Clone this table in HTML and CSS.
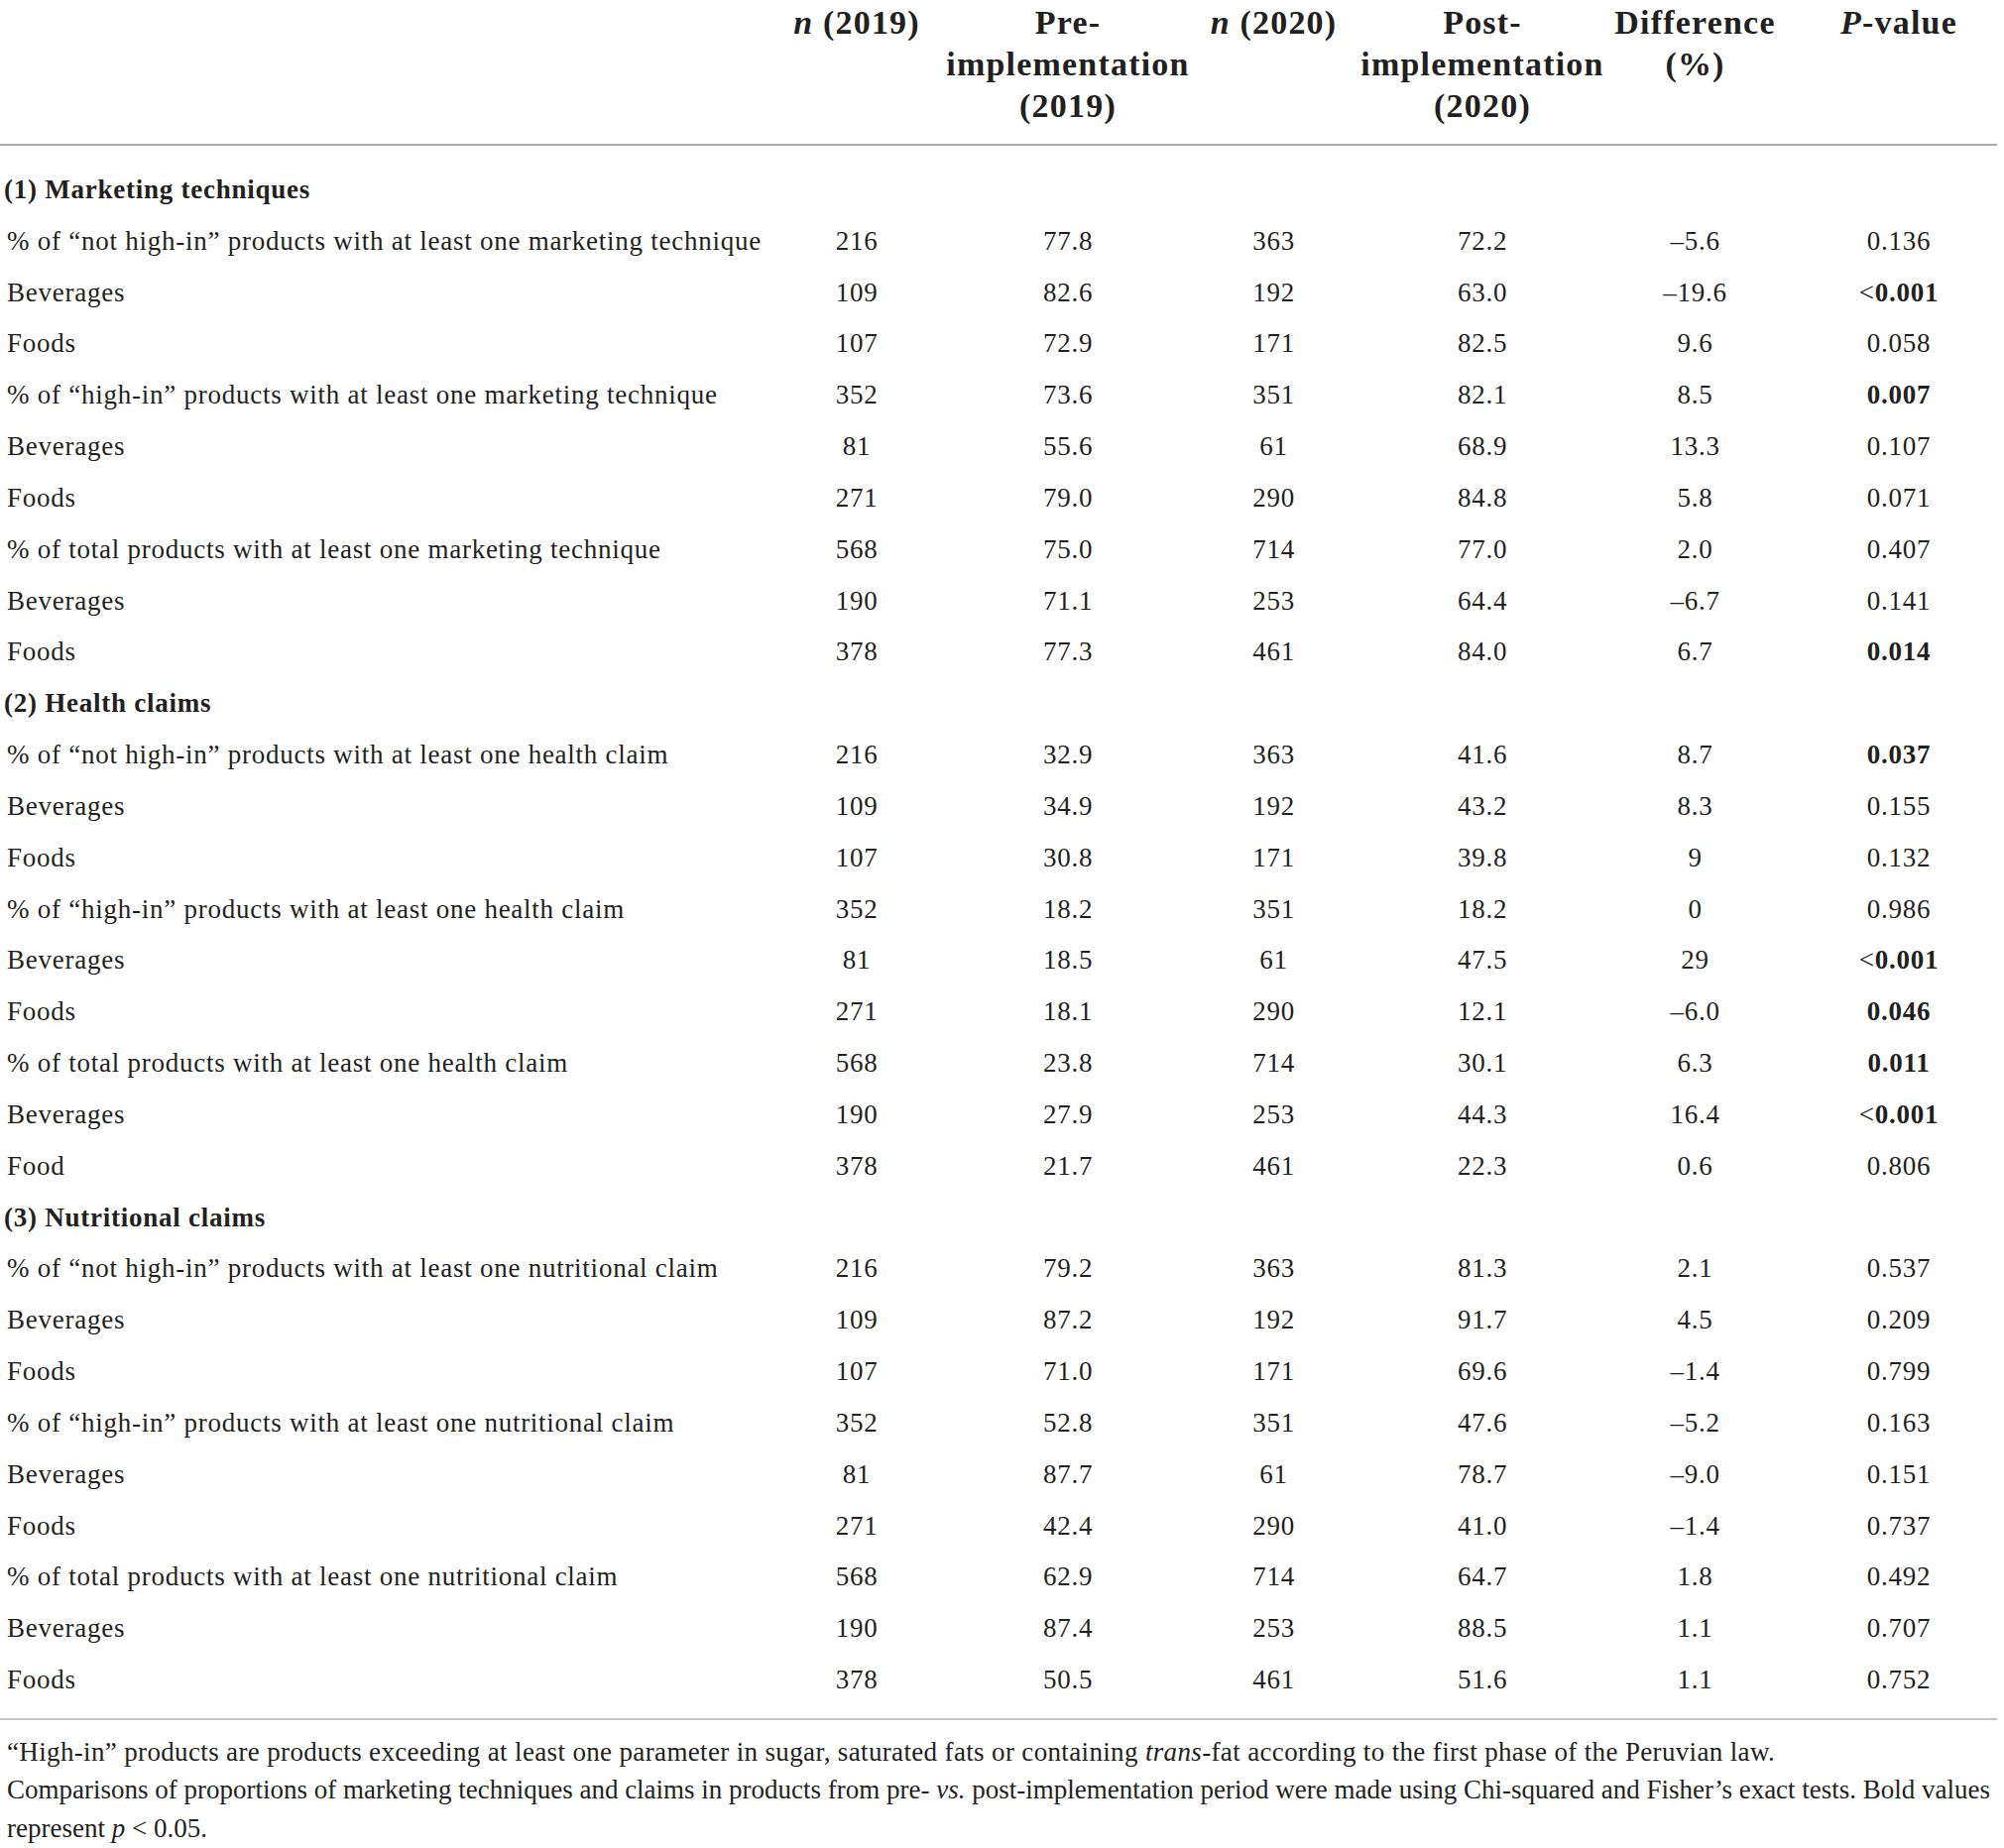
FILE: index.html
```html
<!DOCTYPE html>
<html lang="en">
<head>
<meta charset="utf-8">
<title>Marketing techniques and claims</title>
<link rel="stylesheet" href="styles.css">
</head>
<body>
<div class="page">
<table class="data">
<colgroup>
<col class="c-label"><col class="c1"><col class="c2"><col class="c3"><col class="c4"><col class="c5"><col class="c6">
</colgroup>
<thead>
<tr>
<th></th>
<th><div class="hd"><span><i>n</i> (2019)</span></div></th>
<th><div class="hd"><span>Pre-</span><span>implementation</span><span>(2019)</span></div></th>
<th><div class="hd"><span><i>n</i> (2020)</span></div></th>
<th><div class="hd"><span>Post-</span><span>implementation</span><span>(2020)</span></div></th>
<th><div class="hd"><span>Difference</span><span>(%)</span></div></th>
<th><div class="hd"><span><i>P</i>-value</span></div></th>
</tr>
</thead>
<tbody>
<tr class="section first"><td colspan="7">(1) Marketing techniques</td></tr>
<tr><td>% of “not high-in” products with at least one marketing technique</td><td>216</td><td>77.8</td><td>363</td><td>72.2</td><td>–5.6</td><td>0.136</td></tr>
<tr><td>Beverages</td><td>109</td><td>82.6</td><td>192</td><td>63.0</td><td>–19.6</td><td>&lt;<b>0.001</b></td></tr>
<tr><td>Foods</td><td>107</td><td>72.9</td><td>171</td><td>82.5</td><td>9.6</td><td>0.058</td></tr>
<tr><td>% of “high-in” products with at least one marketing technique</td><td>352</td><td>73.6</td><td>351</td><td>82.1</td><td>8.5</td><td><b>0.007</b></td></tr>
<tr><td>Beverages</td><td>81</td><td>55.6</td><td>61</td><td>68.9</td><td>13.3</td><td>0.107</td></tr>
<tr><td>Foods</td><td>271</td><td>79.0</td><td>290</td><td>84.8</td><td>5.8</td><td>0.071</td></tr>
<tr><td>% of total products with at least one marketing technique</td><td>568</td><td>75.0</td><td>714</td><td>77.0</td><td>2.0</td><td>0.407</td></tr>
<tr><td>Beverages</td><td>190</td><td>71.1</td><td>253</td><td>64.4</td><td>–6.7</td><td>0.141</td></tr>
<tr><td>Foods</td><td>378</td><td>77.3</td><td>461</td><td>84.0</td><td>6.7</td><td><b>0.014</b></td></tr>
<tr class="section"><td colspan="7">(2) Health claims</td></tr>
<tr><td>% of “not high-in” products with at least one health claim</td><td>216</td><td>32.9</td><td>363</td><td>41.6</td><td>8.7</td><td><b>0.037</b></td></tr>
<tr><td>Beverages</td><td>109</td><td>34.9</td><td>192</td><td>43.2</td><td>8.3</td><td>0.155</td></tr>
<tr><td>Foods</td><td>107</td><td>30.8</td><td>171</td><td>39.8</td><td>9</td><td>0.132</td></tr>
<tr><td>% of “high-in” products with at least one health claim</td><td>352</td><td>18.2</td><td>351</td><td>18.2</td><td>0</td><td>0.986</td></tr>
<tr><td>Beverages</td><td>81</td><td>18.5</td><td>61</td><td>47.5</td><td>29</td><td>&lt;<b>0.001</b></td></tr>
<tr><td>Foods</td><td>271</td><td>18.1</td><td>290</td><td>12.1</td><td>–6.0</td><td><b>0.046</b></td></tr>
<tr><td>% of total products with at least one health claim</td><td>568</td><td>23.8</td><td>714</td><td>30.1</td><td>6.3</td><td><b>0.011</b></td></tr>
<tr><td>Beverages</td><td>190</td><td>27.9</td><td>253</td><td>44.3</td><td>16.4</td><td>&lt;<b>0.001</b></td></tr>
<tr><td>Food</td><td>378</td><td>21.7</td><td>461</td><td>22.3</td><td>0.6</td><td>0.806</td></tr>
<tr class="section"><td colspan="7">(3) Nutritional claims</td></tr>
<tr><td>% of “not high-in” products with at least one nutritional claim</td><td>216</td><td>79.2</td><td>363</td><td>81.3</td><td>2.1</td><td>0.537</td></tr>
<tr><td>Beverages</td><td>109</td><td>87.2</td><td>192</td><td>91.7</td><td>4.5</td><td>0.209</td></tr>
<tr><td>Foods</td><td>107</td><td>71.0</td><td>171</td><td>69.6</td><td>–1.4</td><td>0.799</td></tr>
<tr><td>% of “high-in” products with at least one nutritional claim</td><td>352</td><td>52.8</td><td>351</td><td>47.6</td><td>–5.2</td><td>0.163</td></tr>
<tr><td>Beverages</td><td>81</td><td>87.7</td><td>61</td><td>78.7</td><td>–9.0</td><td>0.151</td></tr>
<tr><td>Foods</td><td>271</td><td>42.4</td><td>290</td><td>41.0</td><td>–1.4</td><td>0.737</td></tr>
<tr><td>% of total products with at least one nutritional claim</td><td>568</td><td>62.9</td><td>714</td><td>64.7</td><td>1.8</td><td>0.492</td></tr>
<tr><td>Beverages</td><td>190</td><td>87.4</td><td>253</td><td>88.5</td><td>1.1</td><td>0.707</td></tr>
<tr><td>Foods</td><td>378</td><td>50.5</td><td>461</td><td>51.6</td><td>1.1</td><td>0.752</td></tr>
</tbody>
</table>
<div class="notes">
<p class="note-wide">“High-in” products are products exceeding at least one parameter in sugar, saturated fats or containing <i>trans</i>-fat according to the first phase of the Peruvian law.</p>
<p>Comparisons of proportions of marketing techniques and claims in products from pre- <i>vs.</i> post-implementation period were made using Chi-squared and Fisher’s exact tests. Bold values represent <i>p</i> &lt; 0.05.</p>
</div>
</div>
</body>
</html>
```
FILE: styles.css
```css
html, body {
  margin: 0;
  padding: 0;
  background: #ffffff;
}
body {
  font-family: "Liberation Serif", "Times New Roman", serif;
  color: #231f20;
}
.page {
  padding: 2px 7px 0 0;
}
.data {
  width: 2014px;
  border-collapse: collapse;
  table-layout: fixed;
}
.c-label { width: 756px; }
.c1 { width: 216px; }
.c2 { width: 210px; }
.c3 { width: 205px; }
.c4 { width: 216px; }
.c5 { width: 213px; }
.c6 { width: 198px; }

.data th {
  font-size: 34px;
  letter-spacing: 1.2px;
  line-height: 42px;
  font-weight: bold;
  vertical-align: top;
  white-space: nowrap;
  padding: 0 0 17px 0;
  border-bottom: 2px solid #a8a8a8;
}
.hd {
  display: flex;
  flex-direction: column;
  align-items: center;
}
.data td {
  font-size: 27px;
  letter-spacing: 0.75px;
  line-height: 51.83px;
  padding: 0;
  text-align: center;
  white-space: nowrap;
  overflow: visible;
}
.data td:first-child {
  text-align: left;
  padding-left: 7px;
}
.data tr.section td {
  font-weight: bold;
  padding-left: 4px;
}
.data tr.first td {
  padding-top: 19px;
}
.notes {
  margin: 12px 0 0 0;
  border-top: 2px solid #c4c4c4;
  padding: 13px 0 0 7px;
  font-size: 27px;
  line-height: 38.5px;
  width: 2007px;
}
.notes p {
  margin: 0;
}
.notes .note-wide {
  letter-spacing: 0.35px;
}
```
